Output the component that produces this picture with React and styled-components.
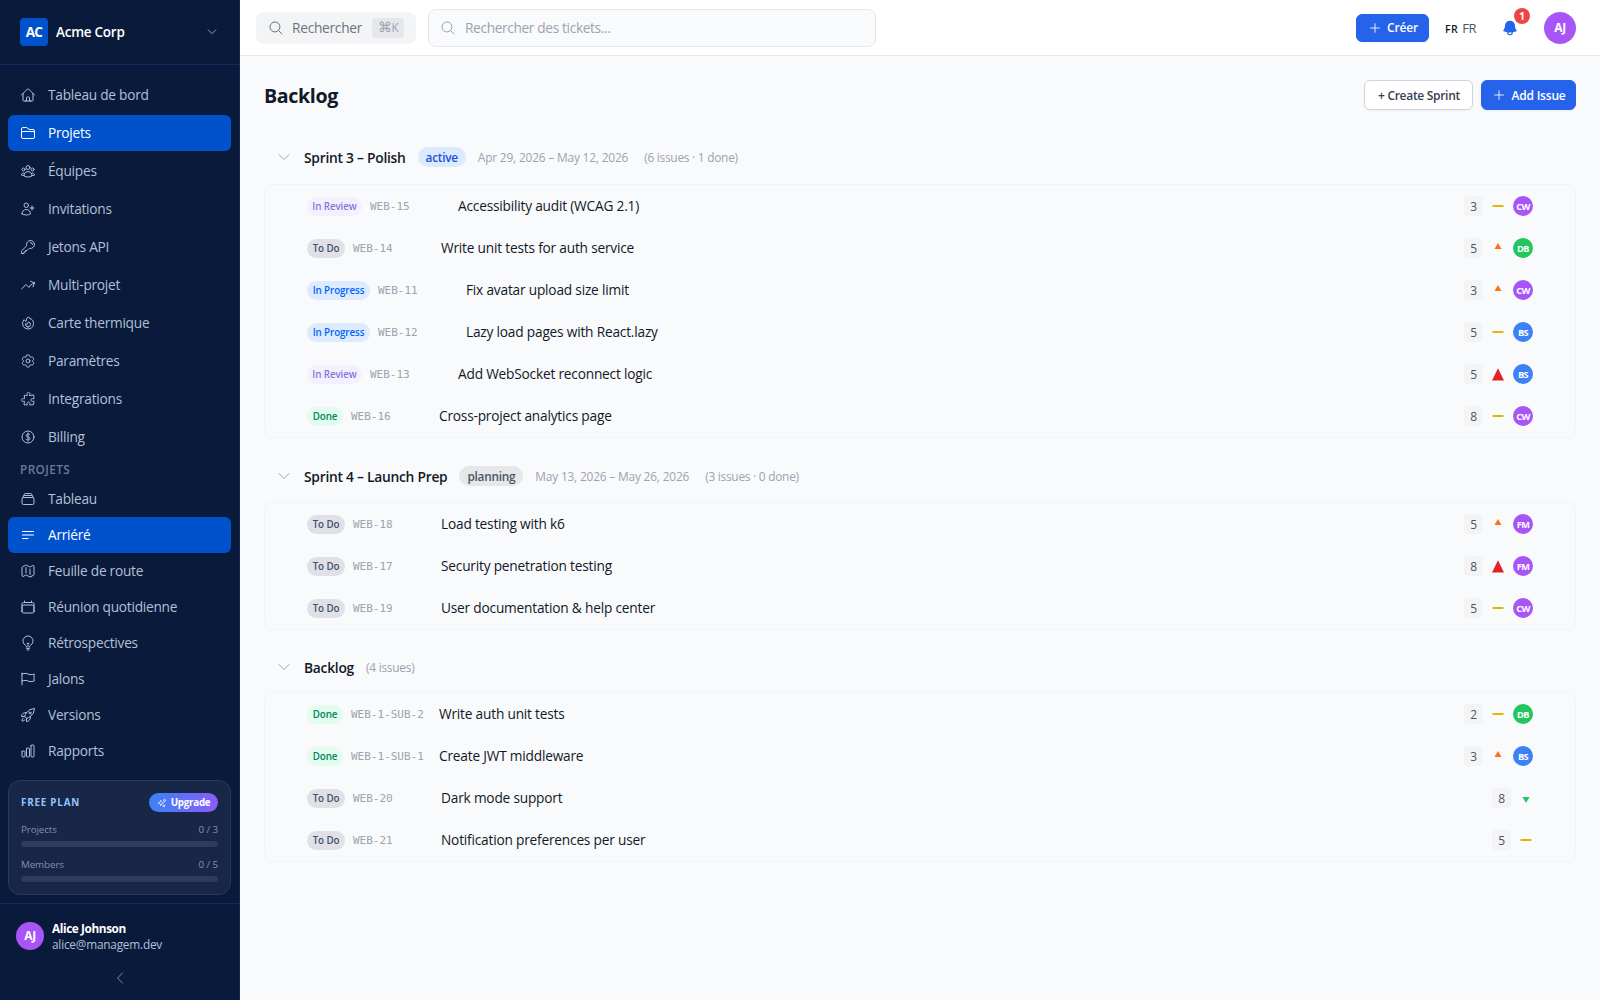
import React from 'react';
import styled, { createGlobalStyle } from 'styled-components';
import {
    HiOutlineHome, HiOutlineFolder, HiOutlineUserGroup, HiOutlineUserPlus, HiOutlineKey,
    HiOutlineArrowTrendingUp, HiOutlineFire, HiOutlineCog6Tooth, HiOutlinePuzzlePiece,
    HiOutlineCurrencyDollar, HiOutlineRectangleStack, HiOutlineBars3BottomLeft, HiOutlineMap,
    HiOutlineCalendar, HiOutlineLightBulb, HiOutlineFlag, HiOutlineRocketLaunch,
    HiOutlineChartBar, HiOutlineSparkles, HiOutlineMagnifyingGlass, HiOutlineChevronDown,
    HiOutlineChevronLeft, HiOutlinePlus, HiBell
} from 'react-icons/hi2';

const mainLinks = [
    { label: 'Tableau de bord', icon: HiOutlineHome },
    { label: 'Projets', icon: HiOutlineFolder, active: true },
    { label: 'Équipes', icon: HiOutlineUserGroup },
    { label: 'Invitations', icon: HiOutlineUserPlus },
    { label: 'Jetons API', icon: HiOutlineKey },
    { label: 'Multi-projet', icon: HiOutlineArrowTrendingUp },
    { label: 'Carte thermique', icon: HiOutlineFire },
    { label: 'Paramètres', icon: HiOutlineCog6Tooth },
    { label: 'Integrations', icon: HiOutlinePuzzlePiece },
    { label: 'Billing', icon: HiOutlineCurrencyDollar },
];

const projectLinks = [
    { label: 'Tableau', icon: HiOutlineRectangleStack },
    { label: 'Arriéré', icon: HiOutlineBars3BottomLeft, active: true },
    { label: 'Feuille de route', icon: HiOutlineMap },
    { label: 'Réunion quotidienne', icon: HiOutlineCalendar },
    { label: 'Rétrospectives', icon: HiOutlineLightBulb },
    { label: 'Jalons', icon: HiOutlineFlag },
    { label: 'Versions', icon: HiOutlineRocketLaunch },
    { label: 'Rapports', icon: HiOutlineChartBar },
];

const sections = [
    {
        name: 'Sprint 3 – Polish',
        state: 'active',
        dates: 'Apr 29, 2026 – May 12, 2026',
        count: '(6 issues · 1 done)',
        issues: [
            { status: 'In Review', id: 'WEB-15', title: 'Accessibility audit (WCAG 2.1)', points: 3, priority: 'medium', user: 'CW' },
            { status: 'To Do', id: 'WEB-14', title: 'Write unit tests for auth service', points: 5, priority: 'high', user: 'DB' },
            { status: 'In Progress', id: 'WEB-11', title: 'Fix avatar upload size limit', points: 3, priority: 'high', user: 'CW' },
            { status: 'In Progress', id: 'WEB-12', title: 'Lazy load pages with React.lazy', points: 5, priority: 'medium', user: 'BS' },
            { status: 'In Review', id: 'WEB-13', title: 'Add WebSocket reconnect logic', points: 5, priority: 'urgent', user: 'BS' },
            { status: 'Done', id: 'WEB-16', title: 'Cross-project analytics page', points: 8, priority: 'medium', user: 'CW' },
        ],
    },
    {
        name: 'Sprint 4 – Launch Prep',
        state: 'planning',
        dates: 'May 13, 2026 – May 26, 2026',
        count: '(3 issues · 0 done)',
        issues: [
            { status: 'To Do', id: 'WEB-18', title: 'Load testing with k6', points: 5, priority: 'high', user: 'FM' },
            { status: 'To Do', id: 'WEB-17', title: 'Security penetration testing', points: 8, priority: 'urgent', user: 'FM' },
            { status: 'To Do', id: 'WEB-19', title: 'User documentation & help center', points: 5, priority: 'medium', user: 'CW' },
        ],
    },
    {
        name: 'Backlog',
        count: '(4 issues)',
        issues: [
            { status: 'Done', id: 'WEB-1-SUB-2', title: 'Write auth unit tests', points: 2, priority: 'medium', user: 'DB' },
            { status: 'Done', id: 'WEB-1-SUB-1', title: 'Create JWT middleware', points: 3, priority: 'high', user: 'BS' },
            { status: 'To Do', id: 'WEB-20', title: 'Dark mode support', points: 8, priority: 'low' },
            { status: 'To Do', id: 'WEB-21', title: 'Notification preferences per user', points: 5, priority: 'medium' },
        ],
    },
];

const statusStyles = {
    'In Review': { bg: '#f3f0ff', color: '#8777d9', width: '55px' },
    'To Do': { bg: '#dfe1e6', color: '#42526e', width: '38px' },
    'In Progress': { bg: '#deebff', color: '#0065ff', width: '63px' },
    'Done': { bg: '#e3fcef', color: '#00875a', width: '36px' },
};

const userColors = { CW: '#a855f7', FM: '#a855f7', DB: '#22c55e', BS: '#3b82f6' };

function Priority({ level }) {
    return (
        <PriorityIcon viewBox="0 0 14 20">
            {level === 'medium' && <rect x="1.5" y="9" width="11" height="2" fill="#eab308" />}
            {level === 'high' && <path d="M7 5 L10.5 11 H3.5 Z" fill="#f97316" />}
            {level === 'urgent' && <path d="M7 4.3 L13 16.5 H1 Z" fill="#dc2626" />}
            {level === 'low' && <path d="M3.5 9 H10.5 L7 15 Z" fill="#22c55e" />}
        </PriorityIcon>
    );
}

function NavLinks({ links, tight }) {
    return (
        <LinkList $tight={tight}>
            {links.map(({ label, icon: Icon, active }) => (
                <NavLink key={label} $active={active}>
                    <Icon />
                    <span>{label}</span>
                </NavLink>
            ))}
        </LinkList>
    );
}

function Issue({ issue }) {
    return (
        <IssueRow>
            <Status $status={issue.status}>{issue.status}</Status>
            <IssueId>{issue.id}</IssueId>
            <IssueTitle>{issue.title}</IssueTitle>
            <Points>{issue.points}</Points>
            <Priority level={issue.priority} />
            {issue.user && <Avatar $size={20} $font={9.2} $color={userColors[issue.user]}>{issue.user}</Avatar>}
        </IssueRow>
    );
}

function Sidebar() {
    return (
        <Side>
            <Workspace>
                <Logo>AC</Logo>
                <span>Acme Corp</span>
                <HiOutlineChevronDown />
            </Workspace>
            <Nav>
                <NavLinks links={mainLinks} />
                <NavLabel>PROJETS</NavLabel>
                <NavLinks links={projectLinks} tight />
            </Nav>
            <Plan>
                <PlanHead>
                    <span>FREE PLAN</span>
                    <Upgrade><HiOutlineSparkles />Upgrade</Upgrade>
                </PlanHead>
                <Usage><span>Projects</span><span>0 / 3</span></Usage>
                <Bar />
                <Usage><span>Members</span><span>0 / 5</span></Usage>
                <Bar />
            </Plan>
            <Profile>
                <Avatar $size={28} $font={12} $color="#a855f7">AJ</Avatar>
                <div>
                    <strong>Alice Johnson</strong>
                    <span>alice@managem.dev</span>
                </div>
            </Profile>
            <Collapse><HiOutlineChevronLeft /></Collapse>
        </Side>
    );
}

export default function App() {
    return (
        <Layout>
            <GlobalStyle />
            <Sidebar />
            <Main>
                <TopBar>
                    <QuickSearch>
                        <HiOutlineMagnifyingGlass />
                        <span>Rechercher</span>
                        <kbd>⌘<small>K</small></kbd>
                    </QuickSearch>
                    <SearchField>
                        <HiOutlineMagnifyingGlass />
                        <span>Rechercher des tickets...</span>
                    </SearchField>
                    <Actions>
                        <Button $primary $width="73px" $height="28px"><HiOutlinePlus />Créer</Button>
                        <Language><small>FR</small>FR</Language>
                        <Notifications><HiBell /><b>1</b></Notifications>
                        <Avatar $size={32} $font={12} $color="#a855f7">AJ</Avatar>
                    </Actions>
                </TopBar>
                <Content>
                    <PageHead>
                        <h1>Backlog</h1>
                        <Button $width="109px" $height="30px">+ Create Sprint</Button>
                        <Button $primary $width="95px" $height="30px"><HiOutlinePlus />Add Issue</Button>
                    </PageHead>
                    {sections.map((section) => (
                        <Section key={section.name}>
                            <SectionHead $plain={!section.state}>
                                <HiOutlineChevronDown />
                                <h2>{section.name}</h2>
                                {section.state && <State $active={section.state === 'active'}>{section.state}</State>}
                                {section.dates && <Dates>{section.dates}</Dates>}
                                <Count>{section.count}</Count>
                            </SectionHead>
                            <Card>
                                {section.issues.map((issue) => <Issue key={issue.id} issue={issue} />)}
                            </Card>
                        </Section>
                    ))}
                </Content>
            </Main>
        </Layout>
    );
}


const GlobalStyle = createGlobalStyle`
    * {
        box-sizing: border-box;
    }

    body {
        margin: 0;
        font-family: "Open Sans", "Noto Sans", sans-serif;
        font-size: 13.7px;
        letter-spacing: -0.25px;
        color: #111827;
    }

    h1, h2 {
        margin: 0;
    }

    span, h1, h2, strong {
        white-space: nowrap;
    }
`;

const Layout = styled.div`
    display: flex;
    height: 1000px;
    overflow: hidden;
`;

const Side = styled.aside`
    display: flex;
    flex-direction: column;
    flex: none;
    width: 240px;
    border-right: 1px solid #172554;
    background: #0a1a3b;
    color: #b3c0d6;
`;

const Workspace = styled.div`
    display: flex;
    align-items: center;
    gap: 8px;
    height: 65px;
    padding: 0 21px 0 20px;
    border-bottom: 1px solid #15295f;
    color: #ffffff;
    font-weight: 600;
    font-size: 13.5px;

    svg {
        width: 12px;
        margin-left: auto;
        color: #94a3b8;
        stroke-width: 2;
    }
`;

const Logo = styled.div`
    display: flex;
    align-items: center;
    justify-content: center;
    width: 28px;
    height: 28px;
    border-radius: 4px;
    background: #0052cc;
    font-weight: 700;
    letter-spacing: -0.6px;
`;

const Nav = styled.nav`
    padding: 12px 8px 0;
`;

const LinkList = styled.div`
    display: flex;
    flex-direction: column;
    gap: ${({ $tight }) => ($tight ? '0' : '2px')};
`;

const NavLink = styled.a`
    display: flex;
    align-items: center;
    gap: 12px;
    height: 36px;
    padding: 0 12px;
    border-radius: 6px;
    background: ${({ $active }) => ($active ? '#0052cc' : 'transparent')};
    color: ${({ $active }) => ($active ? '#ffffff' : '#b3c0d6')};

    svg {
        width: 16px;
        height: 16px;
    }

    span {
        padding-bottom: 1px;
    }
`;

const NavLabel = styled.div`
    height: 26px;
    padding: 5px 12px 0;
    color: #6b7a93;
    font-size: 11.8px;
    font-weight: 600;
    line-height: 18px;
    letter-spacing: 0.4px;
`;

const Plan = styled.div`
    height: 115px;
    margin: 11px 8px 8px;
    padding: 12px;
    border: 1px solid #2b3957;
    border-radius: 12px;
    background: #182647;
    font-size: 9.8px;
    letter-spacing: -0.1px;
`;

const PlanHead = styled.div`
    display: flex;
    align-items: center;
    justify-content: space-between;
    height: 19px;
    margin-bottom: 8px;
    color: #93c5fd;
    font-weight: 700;
    letter-spacing: 0.8px;
`;

const Upgrade = styled.button`
    display: flex;
    align-items: center;
    justify-content: center;
    gap: 4px;
    width: 69px;
    height: 19px;
    padding: 0;
    border: 0;
    border-radius: 10px;
    background: linear-gradient(90deg, #3b82f6, #8b5cf6);
    color: #ffffff;
    font: inherit;
    letter-spacing: -0.25px;

    svg {
        width: 10px;
        height: 10px;
    }
`;

const Usage = styled.div`
    display: flex;
    justify-content: space-between;
    height: 21px;
    color: #8592aa;
    line-height: 19px;
`;

const Bar = styled.div`
    height: 6px;
    margin-bottom: 8px;
    border-radius: 3px;
    background: #2f3c59;
`;

const Profile = styled.div`
    display: flex;
    align-items: center;
    gap: 8px;
    height: 62px;
    padding: 3px 16px 0;
    border-top: 1px solid #15295f;
    font-size: 11.8px;
    line-height: 16px;

    strong {
        display: block;
        color: #ffffff;
        font-weight: 700;
        letter-spacing: -0.4px;
    }

    span {
        display: block;
        letter-spacing: -0.2px;
    }
`;

const Collapse = styled.div`
    display: flex;
    justify-content: center;
    padding-top: 5px;
    color: #7c8aa5;

    svg {
        width: 16px;
        height: 16px;
    }
`;

const Avatar = styled.div`
    display: flex;
    align-items: center;
    justify-content: center;
    flex: none;
    width: ${({ $size }) => $size}px;
    height: ${({ $size }) => $size}px;
    border-radius: 50%;
    background: ${({ $color }) => $color};
    color: #ffffff;
    font-size: ${({ $font }) => $font}px;
    font-weight: 700;
    letter-spacing: -0.5px;
`;

const Main = styled.main`
    flex: 1;
    background: #f9fafb;
`;

const TopBar = styled.header`
    display: flex;
    align-items: center;
    gap: 12px;
    height: 56px;
    padding: 0 24px 0 16px;
    border-bottom: 1px solid #e5e7eb;
    background: #ffffff;
`;

const QuickSearch = styled.div`
    display: flex;
    align-items: center;
    gap: 8px;
    width: 160px;
    height: 32px;
    padding: 0 12px;
    border-radius: 8px;
    background: #f3f4f6;
    color: #6b7280;

    svg {
        width: 16px;
        height: 16px;
    }

    kbd {
        width: 32px;
        height: 20px;
        margin-left: auto;
        border-radius: 4px;
        background: #e5e7eb;
        color: #9ca3af;
        font-family: inherit;
        font-size: 14px;
        line-height: 18px;
        text-align: center;
        white-space: nowrap;
    }

    small {
        font-size: 11.8px;
    }
`;

const SearchField = styled.div`
    display: flex;
    align-items: center;
    gap: 9px;
    width: 448px;
    height: 38px;
    padding: 0 11px;
    border: 1px solid #e5e7eb;
    border-radius: 8px;
    background: #f9fafb;
    color: #9ca3af;

    svg {
        width: 16px;
        height: 16px;
    }

    span {
        letter-spacing: -0.35px;
    }
`;

const Actions = styled.div`
    display: flex;
    align-items: center;
    gap: 16px;
    margin-left: auto;
`;

const Button = styled.button`
    display: flex;
    align-items: center;
    justify-content: center;
    gap: 5px;
    width: ${({ $width }) => $width};
    height: ${({ $height }) => $height};
    padding: 0 0 0 1px;
    border: 1px solid ${({ $primary }) => ($primary ? '#2563eb' : '#d1d5db')};
    border-radius: 6px;
    background: ${({ $primary }) => ($primary ? '#2563eb' : '#ffffff')};
    color: ${({ $primary }) => ($primary ? '#ffffff' : '#374151')};
    box-shadow: 0 1px 2px rgba(0, 0, 0, 0.05);
    font-family: inherit;
    font-size: 12px;
    font-weight: 600;
    letter-spacing: ${({ $primary }) => ($primary ? '-0.2px' : '-0.3px')};
    white-space: nowrap;

    svg {
        width: 14px;
        height: 14px;
    }
`;

const Language = styled.div`
    display: flex;
    align-items: baseline;
    gap: 4px;
    width: 31px;
    color: #4b5563;
    font-size: 13px;
    letter-spacing: -0.6px;

    small {
        color: #111827;
        font-size: 10.5px;
        font-weight: 600;
        letter-spacing: 0.5px;
    }
`;

const Notifications = styled.div`
    position: relative;
    display: flex;
    align-items: center;
    justify-content: center;
    width: 36px;
    height: 36px;
    color: #2563eb;

    svg {
        width: 18px;
        height: 18px;
    }

    b {
        position: absolute;
        top: -2px;
        right: -2px;
        width: 16px;
        height: 16px;
        border-radius: 50%;
        background: #ef4444;
        color: #ffffff;
        font-size: 10px;
        line-height: 16px;
        text-align: center;
    }
`;

const Content = styled.div`
    padding: 24px 24px 0;
`;

const PageHead = styled.div`
    display: flex;
    align-items: center;
    gap: 8px;
    height: 30px;
    margin-bottom: 25px;

    h1 {
        margin-right: auto;
        padding-top: 1px;
        font-size: 19.6px;
        font-weight: 700;
        letter-spacing: -0.35px;
    }
`;

const Section = styled.section`
    &:first-of-type {
        header {
            margin-bottom: 5px;
        }
    }
`;

const SectionHead = styled.header`
    display: flex;
    align-items: center;
    height: ${({ $plain }) => ($plain ? '42px' : '44px')};
    margin-bottom: 4px;
    padding-left: 12px;

    svg {
        width: 16px;
        height: 16px;
        margin-right: 12px;
        color: #9ca3af;
    }

    h2 {
        margin-right: 12px;
        font-size: 13.8px;
        font-weight: 600;
    }
`;

const State = styled.span`
    height: 20px;
    margin-right: 12px;
    padding: 0 8px;
    border-radius: 10px;
    background: ${({ $active }) => ($active ? '#dbeafe' : '#e5e7eb')};
    color: ${({ $active }) => ($active ? '#1d4ed8' : '#4b5563')};
    font-size: 11.8px;
    font-weight: 600;
    line-height: 20px;
`;

const Dates = styled.span`
    margin-right: 16px;
    color: #9ca3af;
    font-size: 11.9px;
    letter-spacing: -0.18px;
`;

const Count = styled.span`
    color: #9ca3af;
    font-size: 11.9px;
`;

const Card = styled.div`
    margin-bottom: 16px;
    border: 1px solid #f3f4f6;
    border-radius: 8px;
`;

const IssueRow = styled.div`
    display: flex;
    align-items: center;
    gap: 8px;
    height: 42px;
    padding: 0 42px;
`;

const Status = styled.span`
    flex: none;
    width: ${({ $status }) => statusStyles[$status].width};
    height: 19px;
    border-radius: 10px;
    background: ${({ $status }) => statusStyles[$status].bg};
    color: ${({ $status }) => statusStyles[$status].color};
    font-size: 9.8px;
    font-weight: 600;
    line-height: 19px;
    letter-spacing: -0.1px;
    text-align: center;
`;

const IssueId = styled.span`
    flex: none;
    width: 80px;
    color: #9ca3af;
    font-family: "DejaVu Sans Mono", "Liberation Mono", monospace;
    font-size: 11px;
    letter-spacing: 0;
`;

const IssueTitle = styled.span`
    margin-right: auto;
    padding-bottom: 1px;
    letter-spacing: -0.2px;
`;

const Points = styled.span`
    width: 19px;
    height: 20px;
    border-radius: 4px;
    background: #f3f4f6;
    color: #4b5563;
    font-size: 12px;
    line-height: 21px;
    text-align: center;
`;

const PriorityIcon = styled.svg`
    flex: none;
    width: 14px;
    height: 20px;
`;
